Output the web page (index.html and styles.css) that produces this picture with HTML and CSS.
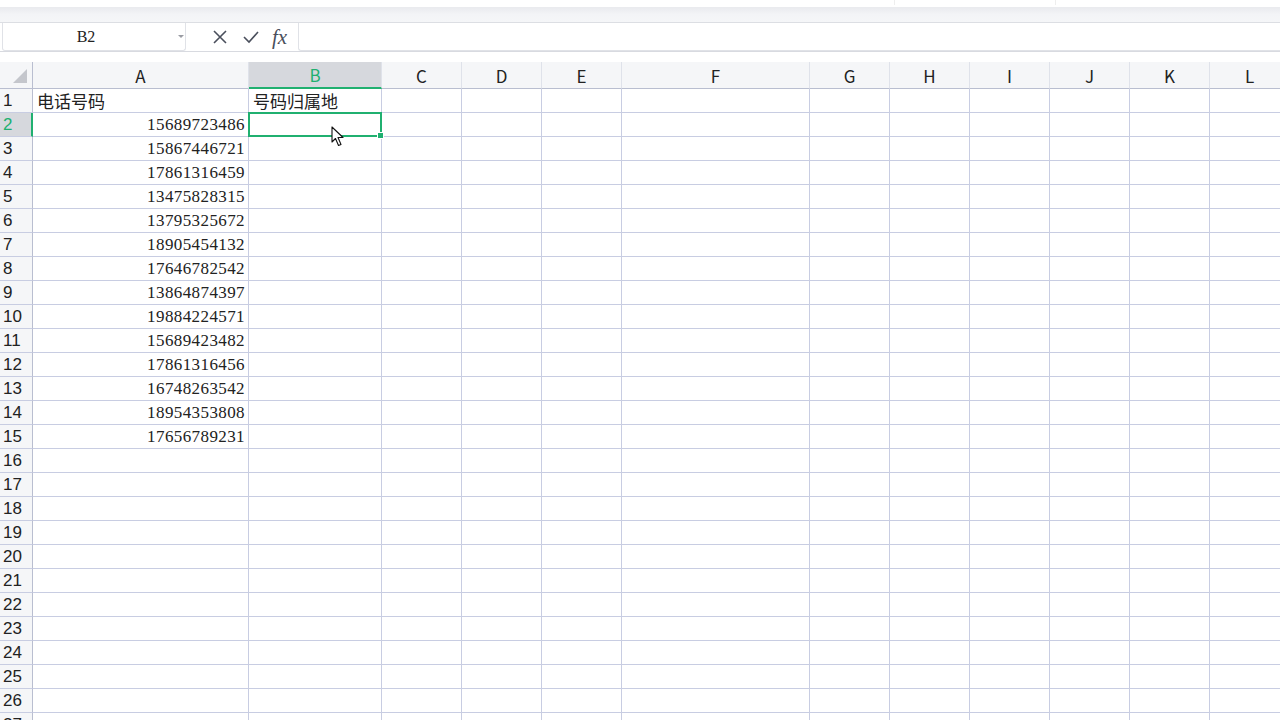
FILE: index.html
```html
<!DOCTYPE html>
<html lang="zh">
<head>
<meta charset="utf-8">
<link rel="stylesheet" href="styles.css">
</head>
<body>
<div class="app">
  <div class="ribbon-edge">
    <span class="tick t1"></span><span class="tick t2"></span>
  </div>
  <div class="band"></div>
  <div class="formula-bar">
    <div class="namebox"><span class="name">B2</span><span class="caret"></span></div>
    <div class="fx-icons">
      <svg class="ic" width="16" height="16" viewBox="0 0 16 16"><path d="M2 2 L14 14 M14 2 L2 14" stroke="#4a4f5c" stroke-width="1.6" fill="none"/></svg>
      <svg class="ic" width="18" height="16" viewBox="0 0 18 16"><path d="M2 8 L7 13 L16 3" stroke="#4a4f5c" stroke-width="1.6" fill="none"/></svg>
      <span class="fx">fx</span>
    </div>
    <div class="input"></div>
  </div>
  <div class="gap"></div>
  <div class="sheet" id="sheet">
    <div class="selection"><span class="handle"></span></div>
    <svg class="cursor" width="14" height="22" viewBox="0 0 14 22"><path d="M1 1 L1 16 L4.5 12.5 L7.5 19.5 L10 18.5 L7 11.5 L12 11.5 Z" fill="#fff" stroke="#111" stroke-width="1.1" stroke-linejoin="round"/></svg>
  </div>
</div>
<script src="script.js"></script>
</body>
</html>
```
FILE: styles.css
```css
html, body {
  margin: 0;
  padding: 0;
  background: #ffffff;
  width: 1280px;
  height: 720px;
  overflow: hidden;
}
.app {
  display: flex;
  flex-direction: column;
  width: 1280px;
  height: 720px;
  overflow: hidden;
}
.app > * {
  flex-shrink: 0;
}
.ribbon-edge {
  height: 7px;
  background: #fff;
  position: relative;
}
.tick {
  position: absolute;
  top: 0;
  width: 1px;
  height: 5px;
  background: #eeeeee;
}
.t1 { left: 894px; }
.t2 { left: 1055px; }
.band {
  height: 15px;
  background: linear-gradient(#e9eaee, #f3f4f7 50%, #f5f6f8);
  border-bottom: 1px solid #dcdee3;
}
.formula-bar {
  height: 28px;
  display: flex;
  align-items: stretch;
  background: #fff;
  border-bottom: 1px solid #d8dae0;
}
.namebox {
  margin-left: 2px;
  width: 184px;
  box-sizing: border-box;
  border: 1px solid #e0e2e7;
  border-top: 0;
  border-radius: 0 0 3px 3px;
  display: flex;
  align-items: center;
  position: relative;
}
.name {
  width: 166px;
  text-align: center;
  font-family: "Liberation Serif", serif;
  font-size: 16px;
  color: #222;
}
.caret {
  width: 0;
  height: 0;
  border-left: 3px solid transparent;
  border-right: 3px solid transparent;
  border-top: 3px solid #9a9ca3;
  margin-left: 9px;
}
.fx-icons {
  width: 112px;
  display: flex;
  align-items: center;
  padding-left: 26px;
  box-sizing: border-box;
  gap: 14px;
}
.ic { display: block; }
.fx {
  font-family: "Liberation Serif", serif;
  font-style: italic;
  font-size: 21px;
  color: #4a4f5c;
  margin-left: -2px;
  line-height: 1;
}
.input {
  flex: 1;
  border: 1px solid #e0e2e7;
  border-top: 0;
  border-right: 0;
  border-radius: 0 0 0 3px;
}
.gap {
  height: 10px;
  background: #fff;
}
.sheet {
  position: relative;
  display: grid;
  grid-template-columns: 33px 216px 133px 80px 80px 80px 188px 80px 80px 80px 80px 80px 80px;
  grid-template-rows: 27px;
  grid-auto-rows: 24px;
  width: 1289px;
}
.c {
  box-sizing: border-box;
  border-right: 1px solid #c8cde2;
  border-bottom: 1px solid #c8cde2;
  display: flex;
  align-items: center;
  overflow: hidden;
  white-space: nowrap;
}
.hd {
  background: #f5f6f8;
  justify-content: center;
  font-family: "Noto Sans CJK SC", "Noto Sans", sans-serif;
  font-size: 17px;
  color: #222;
  border-bottom-color: #b9bed0;
  border-right-color: #dfe2ea;
}
.hd.sel {
  background: #d6d8dd;
  color: #20b070;
  border-bottom: 2px solid #20b070;
}
.corner {
  position: relative;
  border-right-color: #b9bed0;
}
.corner::after {
  content: "";
  position: absolute;
  right: 5px;
  bottom: 5px;
  width: 0;
  height: 0;
  border-left: 14px solid transparent;
  border-bottom: 14px solid #c4c6cc;
}
.rh {
  background: #f5f6f8;
  font-family: "Liberation Sans", sans-serif;
  font-size: 17px;
  color: #222;
  padding-left: 3px;
  border-right-color: #b9bed0;
}
.rh.sel {
  background: #d6d8dd;
  color: #20b070;
  border-right: 2px solid #20b070;
}
.txt {
  font-family: "Noto Sans CJK SC", sans-serif;
  font-size: 17px;
  color: #222;
  padding-left: 4px;
}
.num {
  font-family: "Liberation Serif", serif;
  font-size: 17px;
  letter-spacing: 0.4px;
  color: #222;
  justify-content: flex-end;
  padding-right: 3px;
}
.selection {
  position: absolute;
  left: 248px;
  top: 50px;
  width: 134px;
  height: 25px;
  box-sizing: border-box;
  border: 2px solid #20b070;
  pointer-events: none;
}
.handle {
  position: absolute;
  right: -4px;
  bottom: -4px;
  width: 5px;
  height: 5px;
  background: #20b070;
  border: 1px solid #fff;
}
.cursor {
  position: absolute;
  left: 331px;
  top: 64px;
}
```
FILE: script.js
```js
(function () {
  var sheet = document.getElementById('sheet');
  var cols = ['A','B','C','D','E','F','G','H','I','J','K','L'];
  var nums = ['15689723486','15867446721','17861316459','13475828315','13795325672','18905454132','17646782542','13864874397','19884224571','15689423482','17861316456','16748263542','18954353808','17656789231'];
  var frag = document.createDocumentFragment();
  function cell(cls, text) {
    var d = document.createElement('div');
    d.className = 'c ' + cls;
    if (text) d.textContent = text;
    frag.appendChild(d);
  }
  cell('hd corner', '');
  cols.forEach(function (c) { cell('hd' + (c === 'B' ? ' sel' : ''), c); });
  for (var r = 1; r <= 27; r++) {
    cell('rh' + (r === 2 ? ' sel' : ''), String(r));
    for (var i = 0; i < cols.length; i++) {
      var cls = '', t = '';
      if (r === 1 && i === 0) { cls = 'txt'; t = '电话号码'; }
      else if (r === 1 && i === 1) { cls = 'txt'; t = '号码归属地'; }
      else if (i === 0 && r >= 2 && r <= 15) { cls = 'num'; t = nums[r - 2]; }
      cell(cls, t);
    }
  }
  sheet.insertBefore(frag, sheet.firstChild);
})();
```
